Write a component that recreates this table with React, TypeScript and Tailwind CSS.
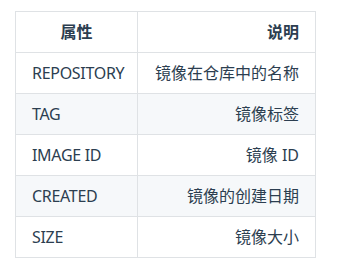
import React from "react";

const rows: [string, string][] = [
  ["REPOSITORY", "镜像在仓库中的名称"],
  ["TAG", "镜像标签"],
  ["IMAGE ID", "镜像 ID"],
  ["CREATED", "镜像的创建日期"],
  ["SIZE", "镜像大小"],
];

export default function App() {
  return (
    <div
      className="w-[343px] h-[267px] bg-white pl-[15px] pt-[11px] text-[#2c3e50]"
      style={{ fontFamily: '"Noto Sans", "Noto Sans CJK SC", sans-serif' }}
    >
      <table className="table-fixed w-[300px] border-collapse text-[16px] leading-[22px]">
        <colgroup>
          <col className="w-[122px]" />
          <col className="w-[178px]" />
        </colgroup>
        <thead>
          <tr>
            <th className="border border-[#dfe2e5] px-4 py-[9px] text-center font-bold whitespace-nowrap">属性</th>
            <th className="border border-[#dfe2e5] px-4 py-[9px] text-right font-bold whitespace-nowrap">说明</th>
          </tr>
        </thead>
        <tbody>
          {rows.map(([a, b], i) => (
            <tr key={a} className={i % 2 === 0 ? "bg-white" : "bg-[#f6f8fa]"}>
              <td className="border border-[#dfe2e5] pl-4 pr-0 py-[9px] text-left whitespace-nowrap tracking-[-0.3px]">{a}</td>
              <td className="border border-[#dfe2e5] px-4 py-[9px] text-right whitespace-nowrap">{b}</td>
            </tr>
          ))}
        </tbody>
      </table>
    </div>
  );
}
